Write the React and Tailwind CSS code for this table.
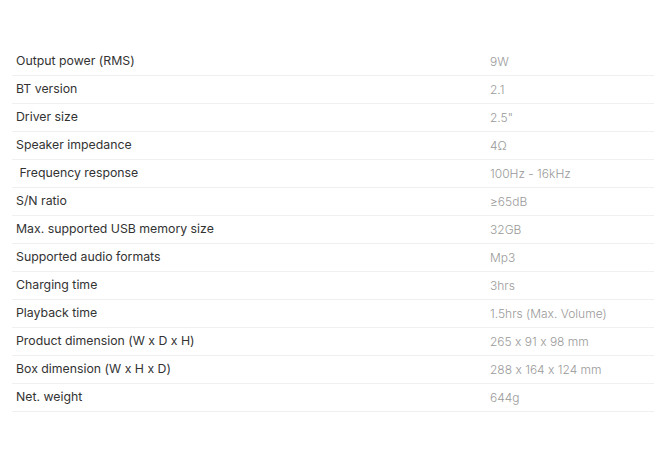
const specs = [
  ['Output power (RMS)', '9W'],
  ['BT version', '2.1'],
  ['Driver size', '2.5"'],
  ['Speaker impedance', '4Ω'],
  [' Frequency response', '100Hz - 16kHz'],
  ['S/N ratio', '≥65dB'],
  ['Max. supported USB memory size', '32GB'],
  ['Supported audio formats', 'Mp3'],
  ['Charging time', '3hrs'],
  ['Playback time', '1.5hrs (Max. Volume)'],
  ['Product dimension (W x D x H)', '265 x 91 x 98 mm'],
  ['Box dimension (W x H x D)', '288 x 164 x 124 mm'],
  ['Net. weight', '644g'],
];

export default function App() {
  return (
    <div className="min-h-[469px] w-[654px] bg-white pt-[48px] pl-[12px] font-['Inter',sans-serif] [font-feature-settings:'calt'_0]">
      <div className="flex flex-col">
        {specs.map(([label, value]) => (
          <div key={label} className="flex h-[28px] items-center border-b border-[#f0f0f0]">
            <div className="w-[478px] whitespace-pre pl-[4px] text-[12.3px] text-[#333333]">
              {label}
            </div>
            <div className="text-[12px] font-light text-[#9a9a9a]">{value}</div>
          </div>
        ))}
      </div>
    </div>
  );
}
